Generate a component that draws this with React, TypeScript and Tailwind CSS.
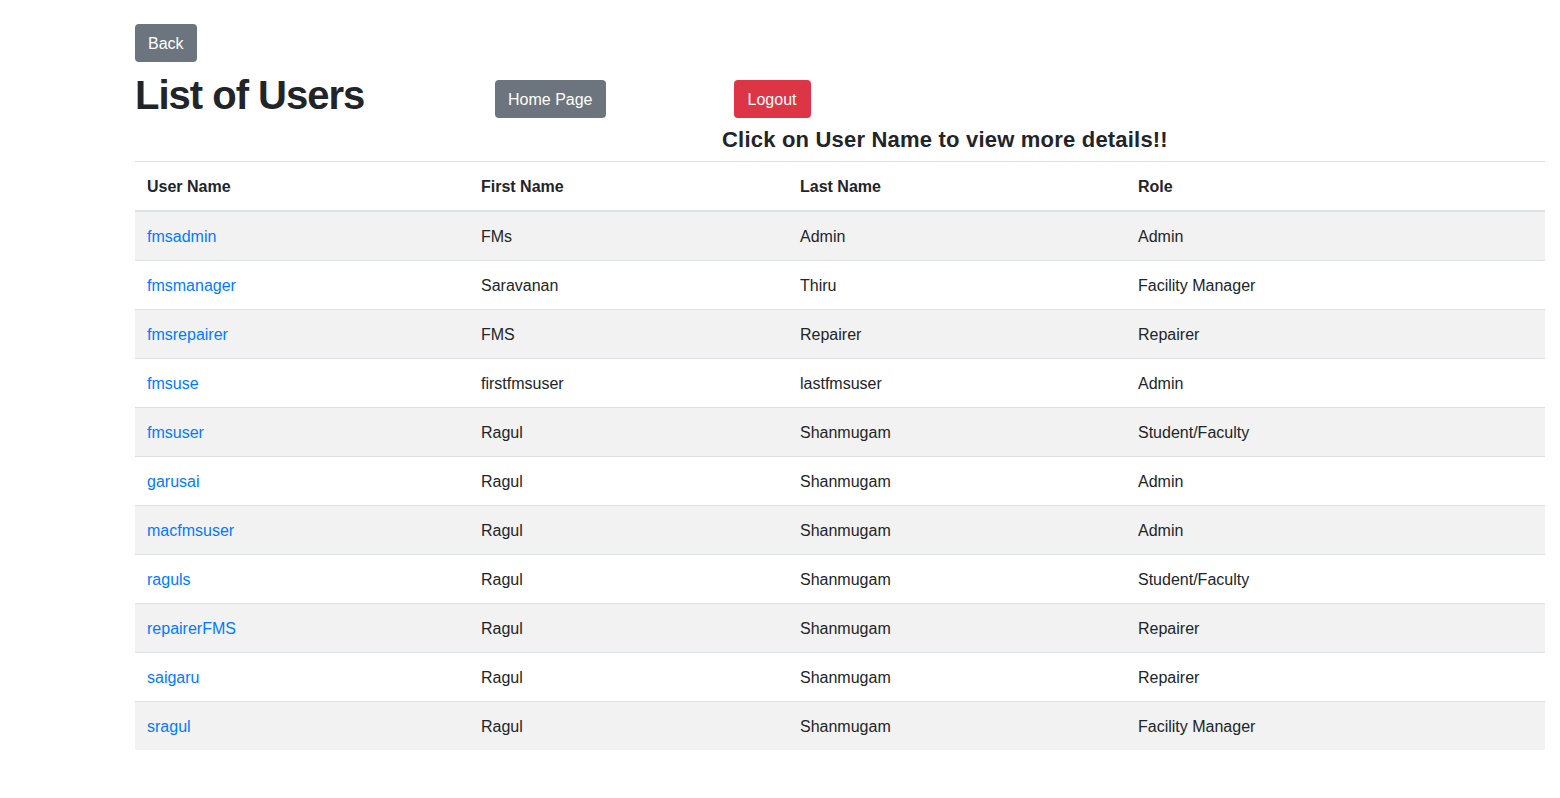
import React from 'react';

const users = [
  { user: 'fmsadmin', first: 'FMs', last: 'Admin', role: 'Admin' },
  { user: 'fmsmanager', first: 'Saravanan', last: 'Thiru', role: 'Facility Manager' },
  { user: 'fmsrepairer', first: 'FMS', last: 'Repairer', role: 'Repairer' },
  { user: 'fmsuse', first: 'firstfmsuser', last: 'lastfmsuser', role: 'Admin' },
  { user: 'fmsuser', first: 'Ragul', last: 'Shanmugam', role: 'Student/Faculty' },
  { user: 'garusai', first: 'Ragul', last: 'Shanmugam', role: 'Admin' },
  { user: 'macfmsuser', first: 'Ragul', last: 'Shanmugam', role: 'Admin' },
  { user: 'raguls', first: 'Ragul', last: 'Shanmugam', role: 'Student/Faculty' },
  { user: 'repairerFMS', first: 'Ragul', last: 'Shanmugam', role: 'Repairer' },
  { user: 'saigaru', first: 'Ragul', last: 'Shanmugam', role: 'Repairer' },
  { user: 'sragul', first: 'Ragul', last: 'Shanmugam', role: 'Facility Manager' },
];

const btn = 'inline-block h-[38px] px-3 pt-px border border-transparent rounded text-white text-base leading-[35px] text-center';
const cell = 'px-3 pt-[13px] pb-[11px] border-t border-[#dee2e6]';

const App: React.FC = () => {
  return (
    <div className="min-h-screen bg-white text-[#212529] font-['Liberation_Sans',Arial,sans-serif]">
      <div className="w-[1410px] ml-[135px] pt-6">
        <button className={`${btn} bg-[#6c757d]`}>Back</button>

        <div className="flex items-start mt-[9px]">
          <h1 className="w-[360px] text-[40px] leading-[48px] font-bold tracking-[-1px]">List of Users</h1>
          <button className={`${btn} bg-[#6c757d] mt-[9px]`}>Home Page</button>
          <button className={`${btn} bg-[#dc3545] mt-[9px] ml-[128px] w-[77px]`}>Logout</button>
        </div>

        <p className="mt-[9px] ml-[587px] text-[22px] leading-6 font-bold tracking-[0.2px]">
          Click on User Name to view more details!!
        </p>

        <table className="mt-[9px] w-full table-fixed border-collapse text-base leading-6">
          <colgroup>
            <col className="w-[334px]" />
            <col className="w-[319px]" />
            <col className="w-[338px]" />
            <col className="w-[419px]" />
          </colgroup>
          <thead>
            <tr>
              {['User Name', 'First Name', 'Last Name', 'Role'].map((h) => (
                <th key={h} className={`${cell} text-left font-bold border-b-2`}>
                  {h}
                </th>
              ))}
            </tr>
          </thead>
          <tbody>
            {users.map((u, i) => (
              <tr key={u.user} className={i % 2 === 0 ? 'bg-[#f2f2f2]' : 'bg-white'}>
                <td className={cell}>
                  <a href="#" className="text-[#007bff]">{u.user}</a>
                </td>
                <td className={cell}>{u.first}</td>
                <td className={cell}>{u.last}</td>
                <td className={cell}>{u.role}</td>
              </tr>
            ))}
          </tbody>
        </table>
      </div>
    </div>
  );
};

export default App;
